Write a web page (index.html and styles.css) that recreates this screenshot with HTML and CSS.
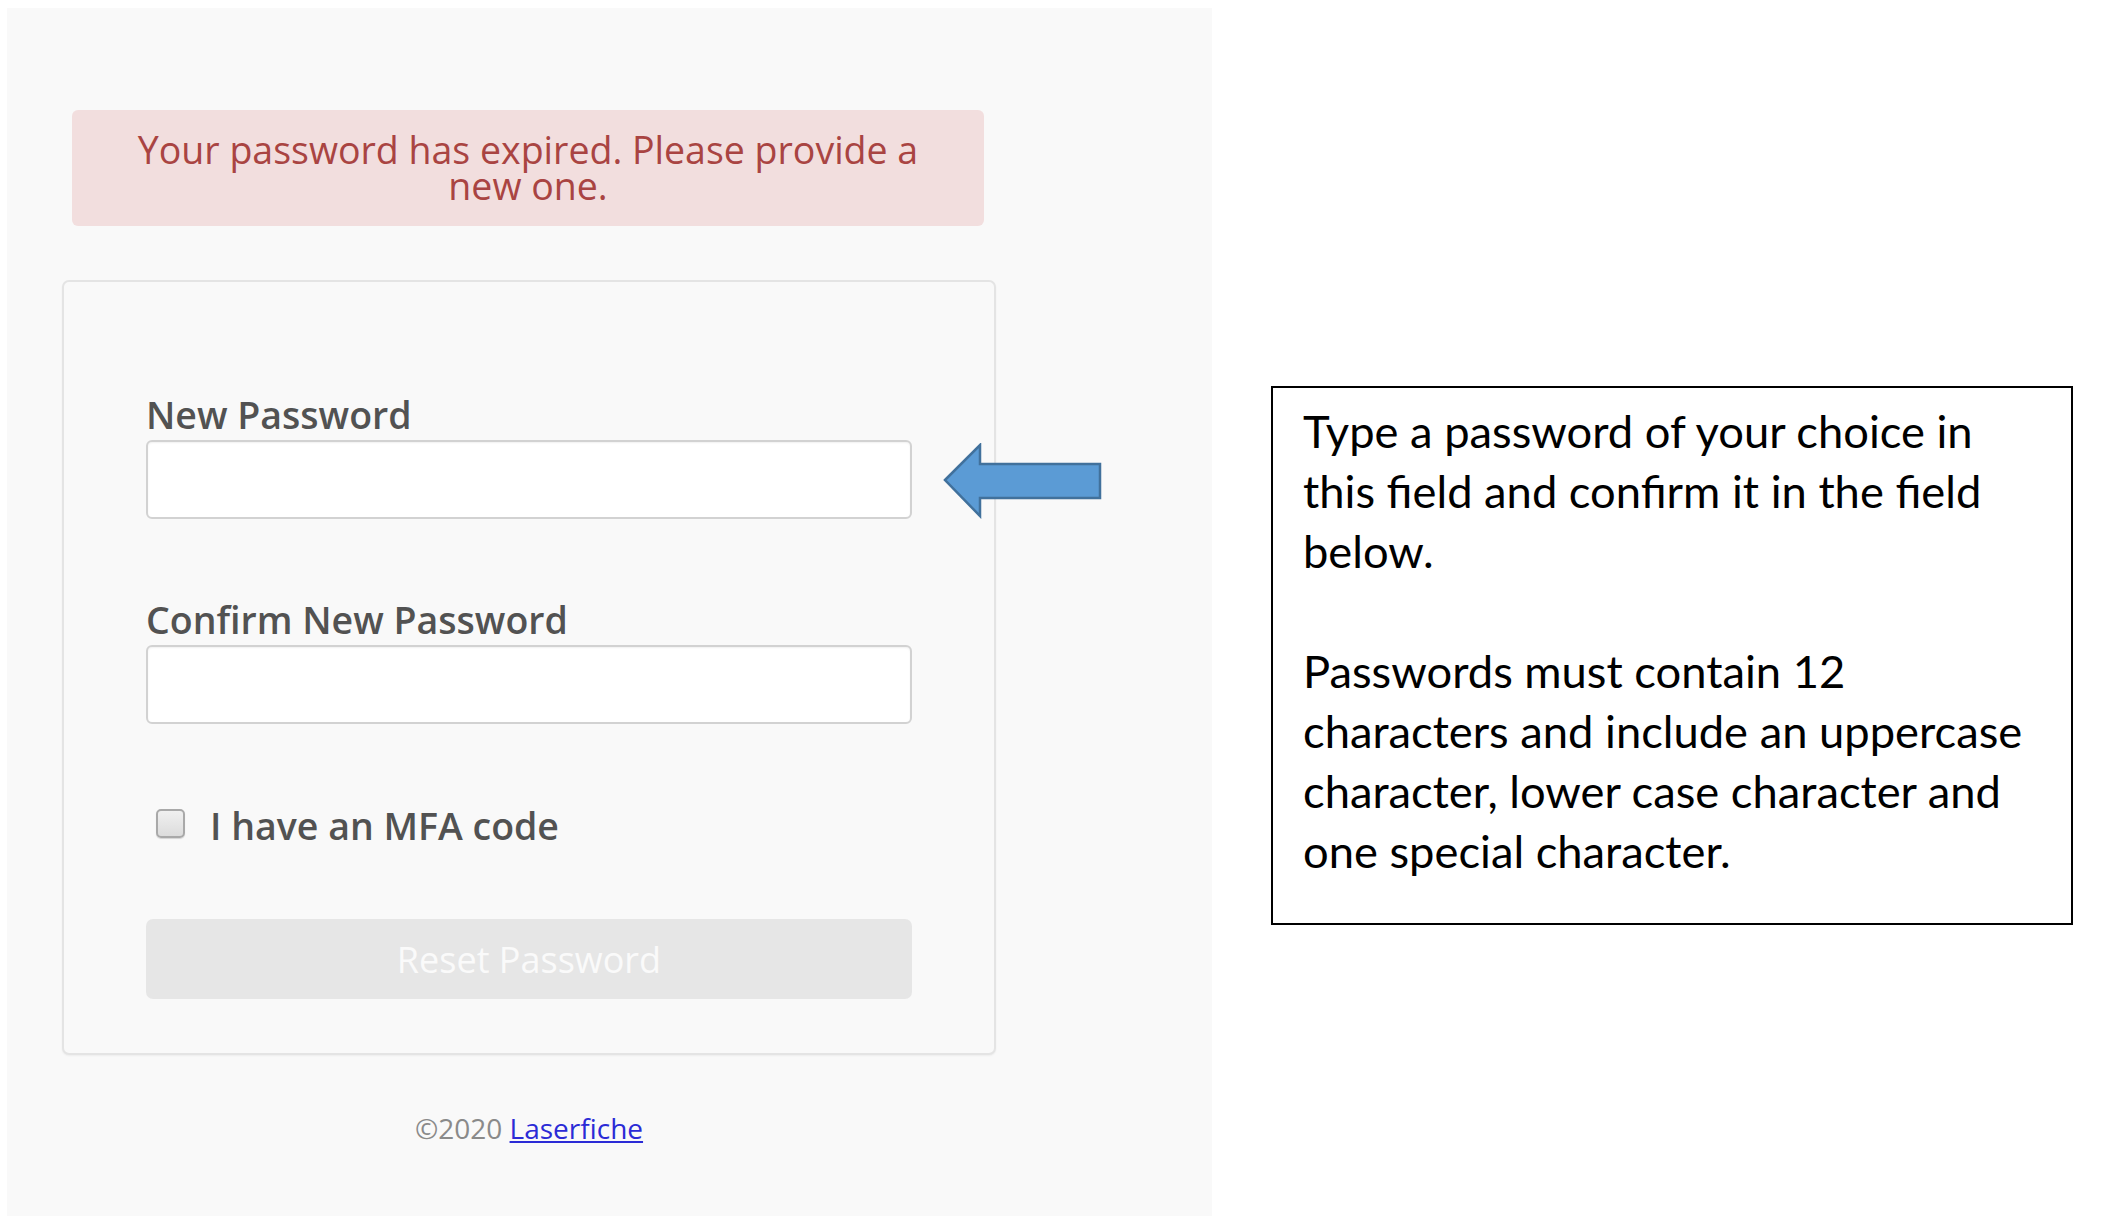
FILE: index.html
```html
<!DOCTYPE html>
<html lang="en">
<head>
<meta charset="utf-8">
<title>Password expired</title>
<link rel="stylesheet" href="styles.css">
</head>
<body>
<div class="page">
  <div class="panel">
    <div class="alert">Your password has expired. Please provide a new one.</div>
    <div class="card">
      <form class="form">
        <label class="label" for="pw1">New Password</label>
        <input class="input" id="pw1" type="password">
        <label class="label label-second" for="pw2">Confirm New Password</label>
        <input class="input" id="pw2" type="password">
        <label class="check-row">
          <span class="checkbox"></span>
          <span class="check-text">I have an MFA code</span>
        </label>
        <button class="btn" type="button">Reset Password</button>
      </form>
      <svg class="arrow" width="160" height="76" viewBox="0 0 160 76">
        <path d="M2 37 L37 2 L37 21 L157 21 L157 55 L37 55 L37 73 Z" fill="#5b9bd5" stroke="#41719c" stroke-width="2.5" stroke-linejoin="miter"/>
      </svg>
    </div>
    <div class="footer">©2020 <a href="#" class="link">Laserfiche</a></div>
  </div>
  <div class="note">
    <p>Type a password of your choice in<br>this field and confirm it in the field<br>below.</p>
    <p>Passwords must contain 12<br>characters and include an uppercase<br>character, lower case character and<br>one special character.</p>
  </div>
</div>
</body>
</html>
```

FILE: styles.css
```css
html, body {
  margin: 0;
  padding: 0;
  background: #ffffff;
}

.page {
  display: flex;
  align-items: flex-start;
  width: 2112px;
  height: 1220px;
  overflow: hidden;
}

.panel {
  margin: 8px 0 0 7px;
  width: 1205px;
  height: 1208px;
  background: #f9f9f9;
  box-sizing: border-box;
  padding: 102px 0 0 55px;
  font-family: "Open Sans", "Noto Sans", sans-serif;
}

.alert {
  margin-left: 10px;
  width: 912px;
  height: 116px;
  box-sizing: border-box;
  background: #f2dede;
  border-radius: 6px;
  color: #a94442;
  font-size: 37.5px;
  line-height: 36px;
  text-align: center;
  padding: 22px 60px 0;
}

.card {
  position: relative;
  margin-top: 54px;
  width: 934px;
  height: 775px;
  box-sizing: border-box;
  border: 2px solid #e4e4e4;
  border-radius: 7px;
  background: #f9f9f9;
  box-shadow: 0 1px 2px rgba(0,0,0,0.05);
  padding: 110px 82px 0;
}

.form {
  display: flex;
  flex-direction: column;
}

.label {
  display: block;
  font-size: 37.5px;
  font-weight: 600;
  line-height: 46px;
  color: #525252;
  margin-bottom: 2px;
}

.label-second {
  margin-top: 78px;
}

.input {
  display: block;
  width: 766px;
  height: 79px;
  box-sizing: border-box;
  margin: 0;
  border: 2px solid #d2d2d2;
  border-radius: 6px;
  background: #ffffff;
  box-shadow: inset 0 1px 2px rgba(0,0,0,0.06);
}

.check-row {
  display: flex;
  align-items: center;
  margin-top: 79px;
  height: 46px;
  padding-left: 10px;
}

.checkbox {
  width: 29px;
  height: 29px;
  box-sizing: border-box;
  border: 2px solid #a9a9a9;
  border-radius: 5px;
  background: linear-gradient(#f0f0f0, #dcdcdc);
  box-shadow: 0 1px 1px rgba(0,0,0,0.15);
  margin-top: -6px;
}

.check-text {
  margin-left: 25px;
  font-size: 37.5px;
  font-weight: 600;
  line-height: 46px;
  color: #525252;
}

.btn {
  margin-top: 70px;
  width: 766px;
  height: 80px;
  border: none;
  border-radius: 7px;
  background: #e6e6e6;
  color: #fafafa;
  font-family: "Open Sans", "Noto Sans", sans-serif;
  font-size: 36px;
  padding: 0;
}

.arrow {
  position: absolute;
  left: 879px;
  top: 161px;
}

.footer {
  width: 934px;
  margin-top: 56px;
  text-align: center;
  font-size: 28px;
  line-height: 34px;
  color: #8a8a8a;
}

.link {
  color: #2b2bd6;
  text-decoration: underline;
}

.note {
  margin: 386px 0 0 59px;
  width: 802px;
  height: 539px;
  box-sizing: border-box;
  border: 2px solid #000000;
  padding: 13px 10px 0 30px;
  font-family: "Lato", "Noto Sans", sans-serif;
  font-size: 45.3px;
  line-height: 60px;
  color: #000000;
  white-space: nowrap;
}

.note p {
  margin: 0 0 60px;
}
```
